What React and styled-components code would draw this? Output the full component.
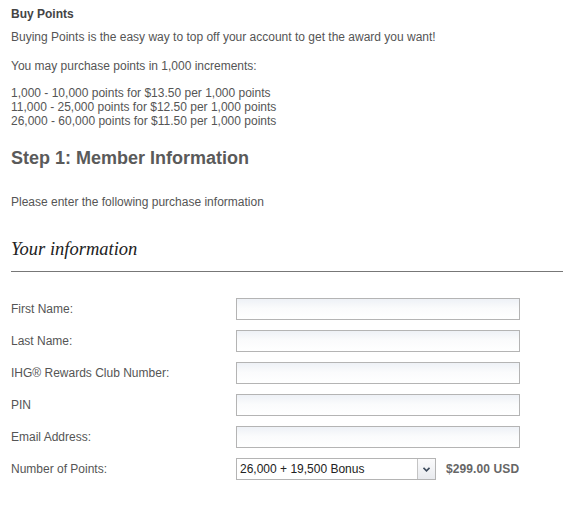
import React from "react";
import styled, { createGlobalStyle } from "styled-components";

const Global = createGlobalStyle`
  html, body { margin: 0; padding: 0; background: #fff; }
  body { font-family: "Liberation Sans", Arial, sans-serif; font-size: 12px; color: #555; }
`;

const Page = styled.div`
  padding: 7px 0 0 11px;
  display: flex;
  flex-direction: column;
`;

const Title = styled.div`
  font-weight: bold;
  line-height: 14px;
  color: #444;
`;

const Para = styled.p`
  margin: ${(p) => p.$top || 0}px 0 0;
  line-height: 14px;
`;

const StepHeading = styled.h2`
  margin: 19px 0 0;
  font-size: 18px;
  line-height: 22px;
  font-weight: bold;
  color: #5a5a5a;
`;

const SectionHeading = styled.h3`
  margin: 29px 0 0;
  font-family: "Liberation Serif", Georgia, serif;
  font-style: italic;
  font-weight: normal;
  font-size: 18.5px;
  line-height: 22px;
  color: #222;
`;

const Rule = styled.div`
  margin-top: 11px;
  height: 1px;
  background: #777;
`;

const Form = styled.div`
  display: flex;
  flex-direction: column;
  gap: 10px;
  margin-top: 26px;
`;

const Row = styled.div`
  display: grid;
  grid-template-columns: 225px auto;
  align-items: center;
  height: 22px;
`;

const Label = styled.label`
  line-height: 14px;
`;

const Input = styled.div`
  width: 282px;
  height: 20px;
  border: 1px solid #b4b4b4;
  background: linear-gradient(#eef1f6 0%, #fafbfc 45%, #fff 100%);
`;

const Controls = styled.div`
  display: flex;
  align-items: center;
  gap: 10px;
`;

const Select = styled.div`
  width: 198px;
  height: 20px;
  border: 1px solid #b4b4b4;
  background: #fff;
  display: flex;
`;

const SelectText = styled.span`
  flex: 1;
  padding-left: 3px;
  line-height: 20px;
  color: #222;
`;

const Arrow = styled.span`
  width: 17px;
  border-left: 1px solid #c4c4c4;
  background: linear-gradient(#fbfbfc, #e8eaee);
  display: flex;
  align-items: center;
  justify-content: center;
`;

const Price = styled.span`
  font-weight: bold;
  color: #666;
  letter-spacing: 0.1px;
`;

const fields = ["First Name:", "Last Name:", "IHG® Rewards Club Number:", "PIN", "Email Address:"];

export default function App() {
  return (
    <>
      <Global />
      <Page>
        <Title>Buy Points</Title>
        <Para $top={9}>Buying Points is the easy way to top off your account to get the award you want!</Para>
        <Para $top={15}>You may purchase points in 1,000 increments:</Para>
        <Para $top={13}>
          1,000 - 10,000 points for $13.50 per 1,000 points<br />
          11,000 - 25,000 points for $12.50 per 1,000 points<br />
          26,000 - 60,000 points for $11.50 per 1,000 points
        </Para>
        <StepHeading>Step 1: Member Information</StepHeading>
        <Para $top={26}>Please enter the following purchase information</Para>
        <SectionHeading>Your information</SectionHeading>
        <Rule />
        <Form>
          {fields.map((f) => (
            <Row key={f}>
              <Label>{f}</Label>
              <Input />
            </Row>
          ))}
          <Row>
            <Label>Number of Points:</Label>
            <Controls>
              <Select>
                <SelectText>26,000 + 19,500 Bonus</SelectText>
                <Arrow>
                  <svg width="7" height="5" viewBox="0 0 7 5">
                    <path d="M0.5 0.8 L3.5 3.8 L6.5 0.8" fill="none" stroke="#3c4a5c" strokeWidth="1.6" />
                  </svg>
                </Arrow>
              </Select>
              <Price>$299.00 USD</Price>
            </Controls>
          </Row>
        </Form>
      </Page>
    </>
  );
}
